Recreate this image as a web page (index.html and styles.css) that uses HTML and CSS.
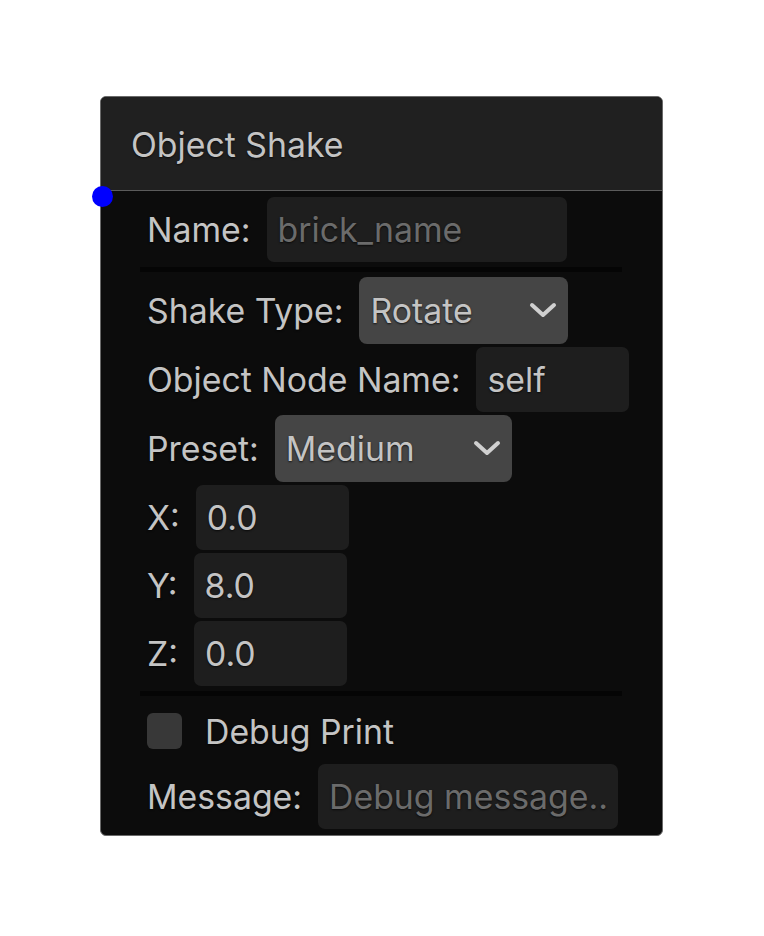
FILE: index.html
```html
<!DOCTYPE html>
<html lang="en">
<head>
  <meta charset="UTF-8">
  <meta name="viewport" content="width=device-width, initial-scale=1.0">
  <title>Object Shake</title>
  <link rel="stylesheet" href="styles.css">
</head>
<body>
  <!-- Graph node: Object Shake -->
  <div class="node">
    <span class="port"></span>
    <div class="node-title">Object Shake</div>

    <div class="node-body">
      <div class="row">
        <span class="label">Name:</span>
        <div class="field field-wide placeholder">brick_name</div>
      </div>

      <div class="sep"></div>

      <div class="row">
        <span class="label">Shake Type:</span>
        <div class="select select-type">
          <span>Rotate</span>
          <svg class="chevron" viewBox="0 0 28 18"><path d="M3 3 L14 13 L25 3"/></svg>
        </div>
      </div>
      <div class="row">
        <span class="label">Object Node Name:</span>
        <div class="field field-short">self</div>
      </div>
      <div class="row">
        <span class="label">Preset:</span>
        <div class="select select-preset">
          <span>Medium</span>
          <svg class="chevron" viewBox="0 0 28 18"><path d="M3 3 L14 13 L25 3"/></svg>
        </div>
      </div>
      <div class="row">
        <span class="label">X:</span>
        <div class="field field-short">0.0</div>
      </div>
      <div class="row">
        <span class="label">Y:</span>
        <div class="field field-short">8.0</div>
      </div>
      <div class="row">
        <span class="label">Z:</span>
        <div class="field field-short">0.0</div>
      </div>

      <div class="sep"></div>

      <div class="row row-check">
        <span class="checkbox"></span>
        <span class="label">Debug Print</span>
      </div>
      <div class="row">
        <span class="label">Message:</span>
        <div class="field field-wide placeholder">Debug message..</div>
      </div>
    </div>
  </div>
</body>
</html>
```

FILE: styles.css
```css
body {
  margin: 0;
  background: #ffffff;
  font-family: Inter, "Noto Sans", sans-serif;
}

.node {
  position: relative;
  width: 561px;
  margin: 96px 0 0 100px;
  background: #0c0c0c;
  border: 1px solid #6a6a6a;
  border-radius: 6px;
  color: #c4c4c4;
  font-size: 33.8px;
  text-shadow: 0 1px 2px rgba(0, 0, 0, 0.7);
}

/* input slot on the left edge */
.port {
  position: absolute;
  left: -9px;
  top: 89px;
  width: 21px;
  height: 21px;
  border-radius: 50%;
  background: #0000ff;
}

.node-title {
  height: 94px;
  box-sizing: border-box;
  padding: 28px 0 0 30px;
  background: #202020;
  border-bottom: 1px solid #5c5c5c;
  border-radius: 5px 5px 0 0;
  line-height: 40px;
}

.node-body {
  display: flex;
  flex-direction: column;
  gap: 3px;
  padding: 6px 40px 6px 39px;
}

.row {
  display: flex;
  align-items: center;
  gap: 16px;
  padding-left: 7px;
}

.label {
  white-space: nowrap;
}

.sep {
  height: 9px;
  display: flex;
  align-items: center;
}
.sep::before {
  content: "";
  flex: 1;
  height: 5px;
  background: #050505;
}

.field {
  flex-shrink: 0;
  height: 65px;
  box-sizing: border-box;
  padding: 0 0 0 11px;
  display: flex;
  align-items: center;
  background: #1e1e1e;
  border-radius: 7px;
  white-space: nowrap;
  overflow: hidden;
}
.field-wide {
  width: 300px;
}
.field-short {
  width: 153px;
}
.placeholder {
  color: #6b6b6b;
}

.select {
  flex-shrink: 0;
  height: 67px;
  box-sizing: border-box;
  padding: 0 11px;
  display: flex;
  align-items: center;
  justify-content: space-between;
  background: #454545;
  border-radius: 8px;
}
.select-type {
  width: 209px;
}
.select-preset {
  width: 237px;
}

.chevron {
  width: 28px;
  height: 18px;
  fill: none;
  stroke: #d0d0d0;
  stroke-width: 4;
  stroke-linecap: round;
  stroke-linejoin: round;
}

.row-check {
  height: 60px;
  gap: 23px;
}
.checkbox {
  width: 35px;
  height: 36px;
  border-radius: 6px;
  background: #383838;
}
```
